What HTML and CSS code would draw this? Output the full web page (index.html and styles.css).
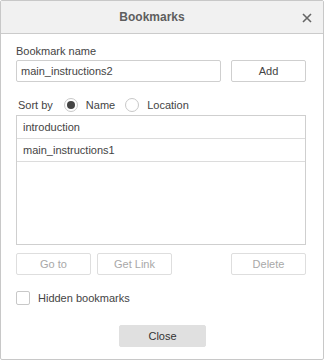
FILE: index.html
```html
<!DOCTYPE html>
<html lang="en">

<head>
    <meta charset="UTF-8">
    <meta name="viewport" content="width=device-width, initial-scale=1.0">
    <title>Bookmarks</title>
    <link rel="stylesheet" href="styles.css">
</head>

<body>
    <div class="dialog">
        <div class="header">
            <span class="title">Bookmarks</span>
            <span class="close-x">
                <svg width="10" height="10" viewBox="0 0 10 10">
                    <path d="M1 1L9 9M9 1L1 9" stroke="#666" stroke-width="1.6" fill="none" />
                </svg>
            </span>
        </div>

        <div class="body">
            <div class="label">Bookmark name</div>
            <div class="name-row">
                <input class="name-input" type="text" value="main_instructions2">
                <button class="btn">Add</button>
            </div>

            <div class="sort-row">
                <span>Sort by</span>
                <span class="radio checked"></span>
                <span>Name</span>
                <span class="radio"></span>
                <span>Location</span>
            </div>

            <div class="list">
                <div class="item">introduction</div>
                <div class="item">main_instructions1</div>
            </div>

            <div class="actions">
                <button class="btn disabled">Go to</button>
                <button class="btn disabled">Get Link</button>
                <button class="btn disabled push">Delete</button>
            </div>

            <div class="check-row">
                <span class="checkbox"></span>
                <span>Hidden bookmarks</span>
            </div>

            <div class="footer">
                <button class="btn close">Close</button>
            </div>
        </div>
    </div>
</body>

</html>
```

FILE: styles.css
```css
html,
body {
    margin: 0;
    padding: 0;
}

body {
    font-family: "Liberation Sans", Arial, sans-serif;
    font-size: 11px;
    color: #444;
    background: #fff;
}

.dialog {
    width: 324px;
    height: 360px;
    box-sizing: border-box;
    border: 1px solid #c8c8c8;
    border-radius: 2px;
    background: #fff;
}

.header {
    height: 32px;
    padding-right: 20px;
    background: #f1f1f1;
    border-bottom: 1px solid #cbcbcb;
    display: flex;
    align-items: center;
    justify-content: center;
    position: relative;
}

.header .title {
    font-size: 12px;
    font-weight: bold;
    color: #5e5e5e;
}

.header .close-x {
    position: absolute;
    right: 11px;
    top: 12px;
    width: 10px;
    height: 10px;
    display: flex;
}

.body {
    padding: 10px 17px 0 15px;
}

.label {
    line-height: 14px;
    margin-bottom: 2px;
}

.name-row {
    display: flex;
    justify-content: space-between;
}

.name-input {
    width: 205px;
    height: 22px;
    box-sizing: border-box;
    border: 1px solid #cfcfcf;
    border-radius: 2px;
    padding: 0 4px;
    font-family: inherit;
    font-size: 11px;
    color: #444;
    outline: none;
}

.btn {
    width: 75px;
    height: 22px;
    box-sizing: border-box;
    border: 1px solid #cfcfcf;
    border-radius: 2px;
    background: #fff;
    font-family: inherit;
    font-size: 11px;
    color: #444;
    padding: 0;
}

.btn.disabled {
    color: #a8a8a8;
    border-color: #dedede;
}

.sort-row {
    display: flex;
    align-items: center;
    margin-top: 15px;
    height: 16px;
}

.sort-row span:first-child {
    margin-left: 2px;
}

.radio {
    width: 12px;
    height: 12px;
    border: 1px solid #c8c8c8;
    border-radius: 50%;
    margin: 0 8px 0 10px;
    position: relative;
}

.radio.checked {
    margin-left: 11px;
}

.radio.checked::after {
    content: "";
    position: absolute;
    left: 2px;
    top: 2px;
    width: 8px;
    height: 8px;
    border-radius: 50%;
    background: #444;
}

.list {
    margin-top: 2px;
    height: 130px;
    box-sizing: border-box;
    border: 1px solid #cfcfcf;
}

.item {
    height: 22px;
    line-height: 22px;
    padding-left: 6px;
    border-bottom: 1px solid #dcdcdc;
}

.actions {
    display: flex;
    gap: 6px;
    margin-top: 8px;
}

.actions .push {
    margin-left: auto;
}

.check-row {
    display: flex;
    align-items: center;
    margin-top: 16px;
    height: 14px;
}

.checkbox {
    width: 12px;
    height: 12px;
    border: 1px solid #c8c8c8;
    border-radius: 2px;
    margin-right: 8px;
}

.footer {
    display: flex;
    justify-content: center;
    margin-top: 20px;
    padding-left: 3px;
}

.btn.close {
    width: 87px;
    background: #e0e0e0;
    border-color: #e0e0e0;
    color: #333;
}
```
